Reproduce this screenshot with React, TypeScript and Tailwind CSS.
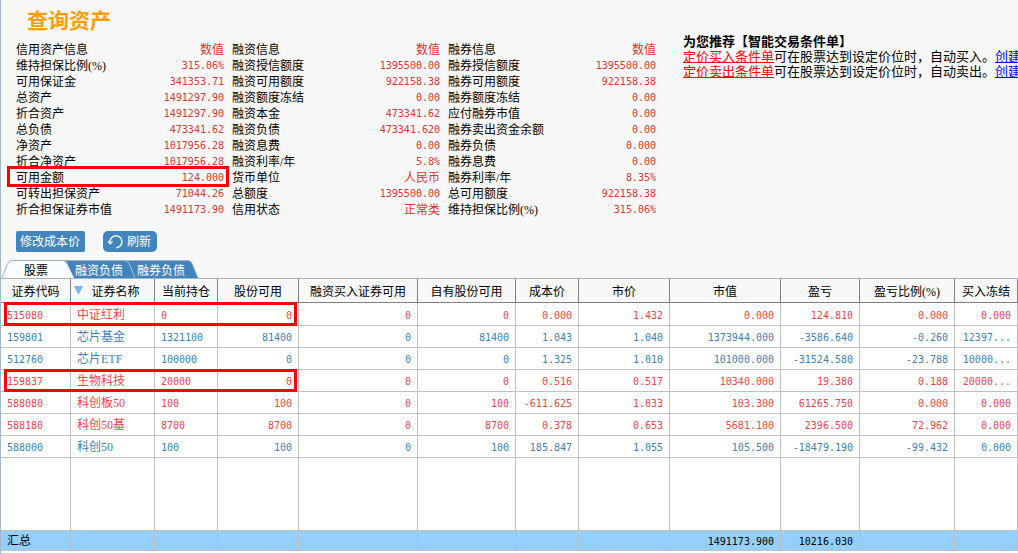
import React from "react";

const NUM = "font-['DejaVu_Sans_Mono','Noto_Sans_CJK_SC',monospace] text-[10px]";
const TEXT = "font-['Liberation_Serif','Noto_Sans_CJK_SC',sans-serif] text-xs";

const info: string[][] = [
  ["信用资产信息", "数值", "融资信息", "数值", "融券信息", "数值"],
  ["维持担保比例(%)", "315.06%", "融资授信额度", "1395500.00", "融券授信额度", "1395500.00"],
  ["可用保证金", "341353.71", "融资可用额度", "922158.38", "融券可用额度", "922158.38"],
  ["总资产", "1491297.90", "融资额度冻结", "0.00", "融券额度冻结", "0.00"],
  ["折合资产", "1491297.90", "融资本金", "473341.62", "应付融券市值", "0.00"],
  ["总负债", "473341.62", "融资负债", "473341.620", "融券卖出资金余额", "0.00"],
  ["净资产", "1017956.28", "融资息费", "0.00", "融券负债", "0.000"],
  ["折合净资产", "1017956.28", "融资利率/年", "5.8%", "融券息费", "0.00"],
  ["可用金额", "124.000", "货币单位", "人民币", "融券利率/年", "8.35%"],
  ["可转出担保资产", "71044.26", "总额度", "1395500.00", "总可用额度", "922158.38"],
  ["折合担保证券市值", "1491173.90", "信用状态", "正常类", "维持担保比例(%)", "315.06%"],
];

const columns = [
  { name: "证券代码", width: "w-[70px]" },
  { name: "证券名称", width: "w-[84px]" },
  { name: "当前持仓", width: "w-[63px]" },
  { name: "股份可用", width: "w-[81px]" },
  { name: "融资买入证券可用", width: "w-[119px]" },
  { name: "自有股份可用", width: "w-[98px]" },
  { name: "成本价", width: "w-[63px]" },
  { name: "市价", width: "w-[91px]" },
  { name: "市值", width: "w-[111px]" },
  { name: "盈亏", width: "w-[79px]" },
  { name: "盈亏比例(%)", width: "w-[95px]" },
  { name: "买入冻结", width: "w-[63px]" },
];

type Holding = { up: boolean; marked?: boolean; cells: string[] };

const holdings: Holding[] = [
  { up: true, marked: true, cells: ["515080", "中证红利", "0", "0", "0", "0", "0.000", "1.432", "0.000", "124.810", "0.000", "0.000"] },
  { up: false, cells: ["159801", "芯片基金", "1321100", "81400", "0", "81400", "1.043", "1.040", "1373944.000", "-3586.640", "-0.260", "12397..."] },
  { up: false, cells: ["512760", "芯片ETF", "100000", "0", "0", "0", "1.325", "1.010", "101000.000", "-31524.580", "-23.788", "10000..."] },
  { up: true, marked: true, cells: ["159837", "生物科技", "20000", "0", "0", "0", "0.516", "0.517", "10340.000", "19.380", "0.188", "20000..."] },
  { up: true, cells: ["588080", "科创板50", "100", "100", "0", "100", "-611.625", "1.033", "103.300", "61265.750", "0.000", "0.000"] },
  { up: true, cells: ["588180", "科创50基", "8700", "8700", "0", "8700", "0.378", "0.653", "5681.100", "2396.500", "72.962", "0.000"] },
  { up: false, cells: ["588000", "科创50", "100", "100", "0", "100", "185.847", "1.055", "105.500", "-18479.190", "-99.432", "0.000"] },
];

const summary = ["汇总", "", "", "", "", "", "", "", "1491173.900", "10216.030", "", ""];

const isNumeric = (value: string) => /^[-\d.%]+$/.test(value);

function AccountInfo() {
  return (
    <table className="w-[648px] table-fixed border-separate border-spacing-0">
      <colgroup>
        <col className="w-[120px]" />
        <col className="w-[96px]" />
        <col className="w-[120px]" />
        <col className="w-[96px]" />
        <col className="w-[120px]" />
        <col className="w-[96px]" />
      </colgroup>
      <tbody>
        {info.map((row) => (
          <tr key={row[0]} className="relative h-4">
            {row.map((value, i) => (
              <td
                key={i}
                className={`p-0 leading-4 whitespace-nowrap ${
                  i % 2 ? "pr-2 text-right text-[#e03232]" : "text-left text-black"
                } ${isNumeric(value) ? NUM : TEXT}`}
              >
                {value}
                {i === 0 && value === "可用金额" && (
                  <span className="pointer-events-none absolute -top-1 -left-[9px] h-[21px] w-[222px] border-3 border-[#ff0000]" />
                )}
              </td>
            ))}
          </tr>
        ))}
      </tbody>
    </table>
  );
}

function Recommendation() {
  const lines = [
    { link: "定价买入条件单", rest: "可在股票达到设定价位时，自动买入。" },
    { link: "定价卖出条件单", rest: "可在股票达到设定价位时，自动卖出。" },
  ];
  return (
    <aside className="min-w-0 flex-1 overflow-hidden pt-[34px] pl-[19px] font-['Liberation_Serif','Noto_Sans_CJK_SC',sans-serif] text-[13px] leading-[15px] whitespace-nowrap text-black">
      <h2 className="font-bold">为您推荐【智能交易条件单】</h2>
      {lines.map((line) => (
        <p key={line.link}>
          <a href="#order" className="text-[#ff0000] underline">{line.link}</a>
          {line.rest}
          <a href="#create" className="text-[#0000ff] underline">创建</a>
        </p>
      ))}
    </aside>
  );
}

function Tabs() {
  return (
    <div role="tablist" className={`relative flex h-[18px] leading-[18px] ${TEXT}`}>
      <svg className="absolute top-0 left-0" width="200" height="19" viewBox="0 0 200 19" aria-hidden="true">
        <path d="M62 .5H187q3 0 4.500 4L197 18H72Z" fill="#4285bd" />
        <path d="M62 .5H187q3 0 4.500 4L197 18" fill="none" stroke="#9fb3cb" />
        <path d="M124 .5q3 0 4.500 4L134 18" fill="none" stroke="#a9bfd6" />
        <path d="M1 18 6.500 4Q8 .5 11 .5H62q3 0 4.500 4L73 18Z" fill="#f9fdff" />
        <path d="M1 18 6.500 4Q8 .5 11 .5H62q3 0 4.500 4" fill="none" stroke="#9fb3cb" />
      </svg>
      <button role="tab" aria-selected="true" className="relative w-[70px] pt-0.5 text-center text-black">股票</button>
      <button role="tab" aria-selected="false" className="relative w-14 pt-0.5 text-center whitespace-nowrap text-white">融资负债</button>
      <button role="tab" aria-selected="false" className="relative ml-1.5 w-14 pt-0.5 text-center whitespace-nowrap text-white">融券负债</button>
    </div>
  );
}

function Holdings() {
  return (
    <table className="w-full table-fixed border-separate border-spacing-0 border-t border-[#a5b5c9] bg-white">
      <colgroup>
        {columns.map((c) => (
          <col key={c.name} className={c.width} />
        ))}
      </colgroup>
      <thead>
        <tr className="h-6 bg-[#f8f8f8]">
          {columns.map((c, i) => (
            <th
              key={c.name}
              className={`relative border-r border-b border-[#808080] px-0 pt-0.5 pb-0 text-center leading-5 font-normal whitespace-nowrap text-black ${
                i === 1 ? "pl-1.5" : ""
              } ${TEXT}`}
            >
              {i === 1 && (
                <svg className="absolute top-[7px] left-[3px]" width="9" height="8" viewBox="0 0 9 8" aria-hidden="true">
                  <path d="M0 0h9L5 8H4Z" fill="#70b9f2" />
                </svg>
              )}
              {c.name}
            </th>
          ))}
        </tr>
      </thead>
      <tbody>
        {holdings.map((row, r) => (
          <tr key={row.cells[0]} className={`relative ${r === 0 ? "h-[23px]" : "h-[22px]"} ${row.up ? "text-[#f54343]" : "text-[#3d80bb]"}`}>
            {row.cells.map((value, i) => (
              <td
                key={i}
                className={`border-r border-b border-[#c0c0c0] px-1.5 pt-0.5 pb-0 leading-[19px] whitespace-nowrap ${i < 3 ? "text-left" : "text-right"} ${
                  isNumeric(value) ? NUM : TEXT
                }`}
              >
                {value}
                {i === 0 && row.marked && (
                  <span className="pointer-events-none absolute -top-px bottom-0 left-[3px] w-[293px] border-3 border-[#ff0000]" />
                )}
              </td>
            ))}
          </tr>
        ))}
        <tr className="h-[73px]">
          {columns.map((c) => (
            <td key={c.name} className="border-r border-b border-[#c0c0c0] p-0" />
          ))}
        </tr>
      </tbody>
      <tfoot>
        <tr className="h-5 bg-[#94d0ff] text-black">
          {summary.map((value, i) => (
            <td
              key={i}
              className={`border-r border-b border-[#c0c0c0] px-1.5 pt-0.5 pb-0 leading-[17px] whitespace-nowrap ${i < 3 ? "text-left" : "text-right"} ${
                isNumeric(value) ? NUM : TEXT
              }`}
            >
              {value}
            </td>
          ))}
        </tr>
      </tfoot>
    </table>
  );
}

export default function App() {
  return (
    <main className="min-h-screen overflow-hidden border-l border-[#a5b5cd] bg-[#f8f8f8]">
      <div className="flex">
        <section className="shrink-0 pl-[15px]">
          <h1 className="pt-2 pb-[11px] pl-[11px] font-['Noto_Sans_CJK_SC',sans-serif] text-[21px] leading-[23px] font-bold text-[#ff9c0a]">查询资产</h1>
          <AccountInfo />
        </section>
        <Recommendation />
      </div>
      <div className={`flex items-center gap-[18px] pt-[13px] pb-2 pl-[15px] text-white ${TEXT}`}>
        <button className="h-[21px] rounded-xs bg-[#4285bd] pr-[5px] pl-1 leading-5 whitespace-nowrap">修改成本价</button>
        <button className="flex h-[21px] items-center gap-[3px] rounded-[5px] bg-[#4285bd] pr-1.5 pl-1 leading-5 whitespace-nowrap">
          <svg width="17" height="17" viewBox="0 0 17 17" fill="none" stroke="#e6f1fa" strokeWidth="1.600" aria-hidden="true">
            <path d="M3.200 10.500A6 6 0 1 1 9 14.800" />
            <path d="M.8 8.300 3.200 10.800 5.600 8.600" strokeWidth="1.300" />
          </svg>
          刷新
        </button>
      </div>
      <Tabs />
      <Holdings />
      <div className="h-0.5 bg-white" />
      <div className="h-px bg-[#c8c8c8]" />
    </main>
  );
}
